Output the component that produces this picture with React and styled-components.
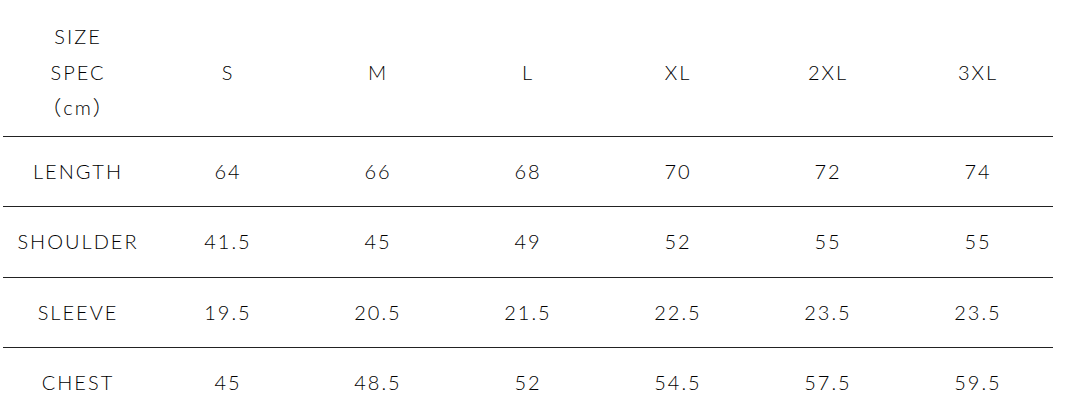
import React from "react";
import styled, { createGlobalStyle } from "styled-components";

const Global = createGlobalStyle`
  html, body { margin: 0; padding: 0; background: #fff; }
  body { font-family: Lato, "Noto Sans CJK JP", sans-serif; color: #111; }
`;

const Page = styled.div`
  padding: 9px 0 0 3px;
`;

const Table = styled.table`
  width: 1050px;
  table-layout: fixed;
  border-collapse: collapse;
  font-size: 20px;
  font-weight: 300;
  line-height: 35.5px;
  letter-spacing: 0.1em;
  color: #000;
`;

const Row = styled.tr`
  border-bottom: ${(p) => (p.$last ? "none" : "1px solid #222")};
`;

const HeadCell = styled.th`
  font-weight: 300;
  text-align: center;
  padding: 10px 0;
  vertical-align: middle;
`;

const Cell = styled.td`
  text-align: center;
  padding: 17px 0;
  vertical-align: middle;
  white-space: nowrap;
`;

const sizes = ["S", "M", "L", "XL", "2XL", "3XL"];
const rows = [
  ["LENGTH", "64", "66", "68", "70", "72", "74"],
  ["SHOULDER", "41.5", "45", "49", "52", "55", "55"],
  ["SLEEVE", "19.5", "20.5", "21.5", "22.5", "23.5", "23.5"],
  ["CHEST", "45", "48.5", "52", "54.5", "57.5", "59.5"],
];

export default function App() {
  return (
    <>
      <Global />
      <Page>
        <Table>
          <thead>
            <Row>
              <HeadCell>
                SIZE
                <br />
                SPEC
                <br />
                （cm）
              </HeadCell>
              {sizes.map((s) => (
                <HeadCell key={s}>{s}</HeadCell>
              ))}
            </Row>
          </thead>
          <tbody>
            {rows.map((r, i) => (
              <Row key={r[0]} $last={i === rows.length - 1}>
                {r.map((v, j) => (
                  <Cell key={j}>{v}</Cell>
                ))}
              </Row>
            ))}
          </tbody>
        </Table>
      </Page>
    </>
  );
}
